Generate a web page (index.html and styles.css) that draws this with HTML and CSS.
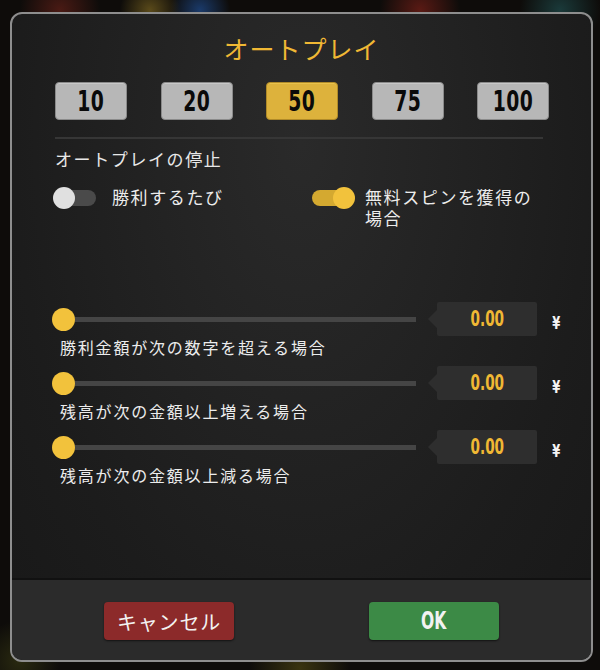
FILE: index.html
```html
<!DOCTYPE html>
<html lang="ja">
<head>
<meta charset="utf-8">
<link rel="stylesheet" href="styles.css">
</head>
<body>
<div class="scene">
  <div class="dialog">
    <div class="main">
      <h1 class="title">オートプレイ</h1>
      <div class="counts">
        <button class="count"><span class="num">10</span></button>
        <button class="count"><span class="num">20</span></button>
        <button class="count active"><span class="num">50</span></button>
        <button class="count"><span class="num">75</span></button>
        <button class="count"><span class="num">100</span></button>
      </div>
      <div class="divider"></div>
      <div class="section-label">オートプレイの停止</div>
      <div class="toggles">
        <div class="toggle-item first">
          <span class="toggle off"><span class="knob"></span></span>
          <span class="toggle-label">勝利するたび</span>
        </div>
        <div class="toggle-item second">
          <span class="toggle on"><span class="knob"></span></span>
          <span class="toggle-label"><span class="tl-line">無料スピンを獲得の</span><span class="tl-line">場合</span></span>
        </div>
      </div>
      <div class="sliders">
        <div class="slider-block">
          <div class="slider-row">
            <span class="s-knob"></span>
            <span class="s-track"></span>
            <span class="value"><span class="arrow"></span><span class="vnum">0.00</span></span>
            <span class="yen">¥</span>
          </div>
          <div class="slider-label">勝利金額が次の数字を超える場合</div>
        </div>
        <div class="slider-block">
          <div class="slider-row">
            <span class="s-knob"></span>
            <span class="s-track"></span>
            <span class="value"><span class="arrow"></span><span class="vnum">0.00</span></span>
            <span class="yen">¥</span>
          </div>
          <div class="slider-label">残高が次の金額以上増える場合</div>
        </div>
        <div class="slider-block">
          <div class="slider-row">
            <span class="s-knob"></span>
            <span class="s-track"></span>
            <span class="value"><span class="arrow"></span><span class="vnum">0.00</span></span>
            <span class="yen">¥</span>
          </div>
          <div class="slider-label">残高が次の金額以上減る場合</div>
        </div>
      </div>
    </div>
    <div class="footer">
      <button class="btn cancel">キャンセル</button>
      <button class="btn ok"><span class="oknum">OK</span></button>
    </div>
  </div>
</div>
</body>
</html>
```

FILE: styles.css
```css
html, body {
  margin: 0;
  padding: 0;
}
body {
  width: 600px;
  height: 670px;
  overflow: hidden;
  font-family: "Noto Sans CJK JP", "Noto Sans", sans-serif;
  background:
    radial-gradient(circle at 60px 10px, #4a1a14 0, transparent 40px),
    radial-gradient(circle at 150px 10px, #5a4a1a 0, transparent 30px),
    radial-gradient(circle at 200px 10px, #1a3a6a 0, transparent 30px),
    radial-gradient(circle at 420px 10px, #5a1a14 0, transparent 40px),
    radial-gradient(circle at 560px 10px, #1a3a3a 0, transparent 40px),
    radial-gradient(circle at 20px 660px, #2a2a10 0, transparent 40px),
    radial-gradient(circle at 300px 668px, #3a3410 0, transparent 50px),
    #0e0c0a;
}
.scene {
  padding: 12px 7px 8px 10px;
  box-sizing: border-box;
  width: 600px;
  height: 670px;
}
.dialog {
  width: 583px;
  height: 650px;
  box-sizing: border-box;
  border: 2px solid #8e8e8e;
  border-radius: 12px;
  overflow: hidden;
  display: flex;
  flex-direction: column;
  background: radial-gradient(ellipse at 50% 20%, #2a2a2a 0%, #1c1c1c 70%, #181818 100%);
}
.main {
  flex: 1;
  padding: 16px 0 0 0;
}
.title {
  margin: 0;
  font-weight: 400;
  font-size: 25px;
  letter-spacing: 1px;
  line-height: 36px;
  color: #f0b834;
  text-align: center;
  height: 36px;
}
.counts {
  margin: 16px 0 0 43px;
  width: 494px;
  display: flex;
  justify-content: space-between;
}
.count {
  width: 72px;
  height: 38px;
  box-sizing: border-box;
  border: 1px solid #8a8a8a;
  border-radius: 4px;
  background: #b7b7b7;
  color: #0a0a0a;
  padding: 0;
  box-shadow: inset 0 1px 0 #c8c8c8;
  display: flex;
  align-items: center;
  justify-content: center;
}
.num {
  display: inline-block;
  font-family: "DejaVu Sans Condensed", "DejaVu Sans", sans-serif;
  font-weight: 700;
  font-size: 29px;
  line-height: 30px;
  transform: scaleX(0.72);
  letter-spacing: 0.5px;
}
.count.active {
  background: #ddb23c;
  border-color: #b08a28;
  box-shadow: inset 0 1px 0 #e8c24c;
}
.divider {
  margin: 17px 0 0 43px;
  width: 488px;
  height: 2px;
  background: #363636;
}
.section-label {
  margin: 8px 0 0 43px;
  color: #e8e8e8;
  font-size: 17px;
  letter-spacing: 1.6px;
  line-height: 24px;
}
.toggles {
  display: flex;
  margin-top: 16px;
  height: 44px;
}
.toggle-item {
  display: flex;
  align-items: flex-start;
}
.toggle-item.first {
  margin-left: 41px;
  width: 257px;
}
.toggle {
  width: 45px;
  height: 22px;
  position: relative;
  display: block;
  flex: none;
}
.toggle::before {
  content: "";
  position: absolute;
  left: 2px;
  right: 2px;
  top: 3px;
  height: 16px;
  border-radius: 8px;
  background: #4a4a4a;
}
.toggle.on::before {
  background: #d4a930;
}
.toggle .knob {
  position: absolute;
  top: 0;
  width: 22px;
  height: 22px;
  border-radius: 50%;
  background: #e0e0e0;
  left: 0;
}
.toggle.on .knob {
  left: auto;
  right: 0;
  background: #f2c23c;
}
.toggle-label {
  color: #ececec;
  font-size: 17px;
  letter-spacing: 1.6px;
  line-height: 21px;
  margin-top: -1px;
}
.tl-line {
  display: block;
  height: 21px;
}
.first .toggle-label {
  margin-left: 14px;
}
.second .toggle-label {
  margin-left: 10px;
}
.sliders {
  margin-top: 71px;
}
.slider-block {
  margin-bottom: 8px;
}
.slider-row {
  display: flex;
  align-items: center;
  height: 34px;
  margin-left: 40px;
}
.s-knob {
  width: 23px;
  height: 23px;
  border-radius: 50%;
  background: #f2c23c;
  flex: none;
}
.s-track {
  width: 341px;
  height: 5px;
  background: #454545;
  flex: none;
}
.value {
  margin-left: 21px;
  width: 100px;
  height: 34px;
  background: #2e2e2e;
  border-radius: 2px;
  position: relative;
  flex: none;
  display: flex;
  align-items: center;
  justify-content: center;
}
.vnum {
  display: inline-block;
  color: #f0b834;
  font-family: "DejaVu Sans Condensed", "DejaVu Sans", sans-serif;
  font-weight: 700;
  font-size: 21px;
  line-height: 24px;
  transform: scaleX(0.72);
}
.arrow {
  position: absolute;
  left: -9px;
  top: 8px;
  width: 0;
  height: 0;
  border-top: 9px solid transparent;
  border-bottom: 9px solid transparent;
  border-right: 9px solid #2e2e2e;
}
.yen {
  margin-left: 14px;
  margin-top: 8px;
  color: #f4f4f4;
  font-family: "DejaVu Sans Condensed", "DejaVu Sans", sans-serif;
  font-weight: 700;
  font-size: 17px;
  display: inline-block;
  transform: scaleX(0.75);
}
.slider-label {
  margin-left: 48px;
  color: #ececec;
  font-size: 16px;
  letter-spacing: 1.8px;
  line-height: 22px;
}
.footer {
  height: 82px;
  flex: none;
  box-sizing: border-box;
  border-top: 2px solid #111;
  background: #2b2b2b;
  display: flex;
  align-items: center;
  padding-left: 92px;
  padding-top: 2px;
}
.btn {
  width: 130px;
  height: 38px;
  border: none;
  border-radius: 4px;
  color: #f2f2f2;
  padding: 0;
  box-shadow: 0 1px 2px rgba(0,0,0,0.6);
}
.cancel {
  background: #8c2a2a;
  font-family: "Noto Sans CJK JP", sans-serif;
  font-size: 20px;
  letter-spacing: 0.8px;
}
.ok {
  margin-left: 135px;
  background: #3c8a46;
}
.oknum {
  display: inline-block;
  font-family: "DejaVu Sans Condensed", "DejaVu Sans", sans-serif;
  font-weight: 700;
  font-size: 24px;
  transform: scaleX(0.72);
}
```
